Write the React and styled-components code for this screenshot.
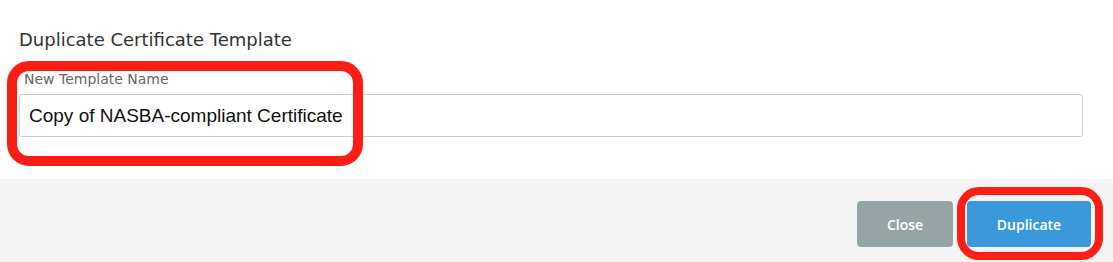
import React from 'react'
import styled, { createGlobalStyle } from 'styled-components';

const GlobalStyle = createGlobalStyle`
    html, body {
        margin: 0;
        padding: 0;
        background: #fff;
    }
    * { box-sizing: border-box; }
`;

function App() {
    return (
        <>
            <GlobalStyle />
            <ModalStyled>
                <div className="modal-body">
                    <h3>Duplicate Certificate Template</h3>
                    <label className="field">
                        <span>New Template Name</span>
                        <input type="text" defaultValue="Copy of NASBA-compliant Certificate" />
                    </label>
                </div>
                <div className="modal-footer">
                    <Button $variant="close">Close</Button>
                    <Button $variant="primary">Duplicate</Button>
                </div>
                <Marker $top={61} $left={7} $width={356} $height={105} $stroke={10} />
                <Marker $top={187} $left={957} $width={146} $height={73} $stroke={8} />
            </ModalStyled>
        </>
    )
}

const ModalStyled = styled.div`
    position: relative;
    width: 1113px;
    height: 262px;
    overflow: hidden;
    font-family: "DejaVu Sans", "Open Sans", sans-serif;

    .modal-body{
        height: 179px;
        padding: 27px 30px 0 19px;
        h3{
            margin: 0;
            font-size: 18px;
            font-weight: 400;
            color: #333;
            line-height: 26px;
        }
    }

    .field{
        display: flex;
        flex-direction: column;
        padding-top: 17px;
        span{
            font-size: 14px;
            color: #666;
            line-height: 18px;
            padding-left: 5px;
            margin-bottom: 6px;
        }
        input{
            width: 1064px;
            height: 43px;
            border: 1px solid #ccc;
            border-radius: 3px;
            padding: 0 9px;
            font-family: "Liberation Sans", Arial, sans-serif;
            font-size: 19px;
            color: #111;
            outline: none;
        }
    }

    .modal-footer{
        height: 83px;
        background-color: #f4f4f4;
        display: flex;
        justify-content: flex-end;
        align-items: flex-start;
        gap: 14px;
        padding: 22px 22px 0 0;
    }
`;

const Button = styled.button`
    height: 46px;
    border: none;
    border-radius: 4px;
    color: #fff;
    font-family: "Open Sans", "Noto Sans", sans-serif;
    font-size: 14px;
    font-weight: 600;
    cursor: pointer;
    width: ${p => p.$variant === 'primary' ? '124px' : '96px'};
    background-color: ${p => p.$variant === 'primary' ? '#3a9ad9' : '#95a5a6'};
`;

const Marker = styled.div`
    position: absolute;
    top: ${p => p.$top}px;
    left: ${p => p.$left}px;
    width: ${p => p.$width}px;
    height: ${p => p.$height}px;
    border: ${p => p.$stroke}px solid #fa1e14;
    border-radius: 22px;
    pointer-events: none;
`;

export default App;
